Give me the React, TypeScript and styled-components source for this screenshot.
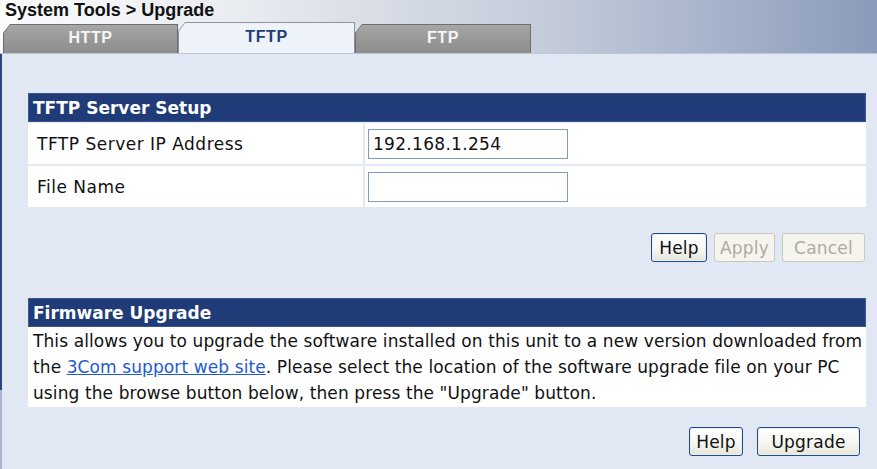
import React from "react";
import styled, { createGlobalStyle } from "styled-components";

const Global = createGlobalStyle`
  html, body { margin: 0; padding: 0; background: #e1e8f4; }
  body { font-family: "DejaVu Sans", Verdana, sans-serif; }
`;

const Page = styled.div`
  width: 877px;
  height: 469px;
  overflow: hidden;
  background: #e1e8f4;
  display: flex;
  flex-direction: column;
`;

const Header = styled.header`
  height: 54px;
  box-sizing: border-box;
  border-bottom: 1px solid #bcc7dc;
  background: linear-gradient(to right, #fbfbfc 0%, #e8ebf0 28%, #c2cad9 64%, #8a9bbb 100%);
  display: flex;
  flex-direction: column;
  padding-left: 3px;
`;

const Title = styled.h1`
  margin: 0 0 0 2px;
  height: 20px;
  font: bold 18px/20px "Liberation Sans", Arial, sans-serif;
  color: #111;
`;

const TabRow = styled.nav`
  flex: 1;
  display: flex;
  align-items: flex-end;
`;

const TabEdge = styled.div<{ $active?: boolean; $w: number }>`
  width: ${(p) => p.$w}px;
  height: ${(p) => (p.$active ? 31 : 29)}px;
  box-sizing: border-box;
  padding: 1px 1px 0 1px;
  background: ${(p) => (p.$active ? "#8d929c" : "#6e6e6e")};
  clip-path: polygon(0 9px, 7px 0, 100% 0, 100% 100%, 0 100%);
`;

const TabFace = styled.div<{ $active?: boolean }>`
  height: 100%;
  box-sizing: border-box;
  padding-bottom: 2px;
  clip-path: polygon(0 8px, 6px 0, 100% 0, 100% 100%, 0 100%);
  background: ${(p) =>
    p.$active ? "#eef2f9" : "linear-gradient(#a6a6a6, #969696 60%, #8e8e8e)"};
  color: ${(p) => (p.$active ? "#1f3c78" : "#f6f6f6")};
  display: flex;
  align-items: center;
  justify-content: center;
  font: bold 16px "Liberation Sans", Arial, sans-serif;
  letter-spacing: 0.6px;
`;

const Main = styled.main`
  flex: 1;
  padding: 39px 11px 0 26px;
  border-style: solid;
  border-width: 0 0 0 2px;
  border-image: linear-gradient(to bottom, #27457f 0, #27457f 335px, #a9b6ce 335px, #a9b6ce 100%) 1;
  display: flex;
  flex-direction: column;
`;

const SectionHead = styled.div`
  height: 29px;
  box-sizing: border-box;
  background: #1f3c78;
  box-shadow: inset 0 0 0 1px #3b5790;
  color: #fff;
  font: bold 17px "DejaVu Sans", Verdana, sans-serif;
  padding-left: 5px;
  display: flex;
  align-items: center;
`;

const FormGrid = styled.div`
  display: grid;
  grid-template-columns: 335px 1fr;
  gap: 2px;
  padding-top: 1px;
  background: #e4eaf5;
`;

const Cell = styled.div<{ $label?: boolean }>`
  height: 41px;
  background: #fff;
  display: flex;
  align-items: center;
  padding-left: ${(p) => (p.$label ? 9 : 3)}px;
  font-size: 17px;
  letter-spacing: 0.5px;
  color: #111;
`;

const TextInput = styled.input`
  width: 200px;
  height: 30px;
  box-sizing: border-box;
  border: 1px solid #7f9db9;
  padding: 0 4px;
  font: 17px "DejaVu Sans", Verdana, sans-serif;
  letter-spacing: 0.3px;
  color: #111;
  background: #fff;
  outline: none;
`;

const ButtonRow = styled.div<{ $top: number; $gap: number; $right: number }>`
  display: flex;
  justify-content: flex-end;
  gap: ${(p) => p.$gap}px;
  margin-top: ${(p) => p.$top}px;
  padding-right: ${(p) => p.$right}px;
`;

const Button = styled.button<{ $w: number }>`
  width: ${(p) => p.$w}px;
  height: 29px;
  padding: 0;
  border: 1px solid #1f4c88;
  border-radius: 3px;
  background: linear-gradient(#ffffff, #f6f6f2 55%, #e6e4da);
  box-shadow: inset 0 0 0 1px #e8edf6;
  font: 17px "DejaVu Sans", Verdana, sans-serif;
  letter-spacing: 0.2px;
  color: #111;
  &:disabled {
    border-color: #cbc9bc;
    background: #f5f4ef;
    box-shadow: none;
    color: #aeab9c;
  }
`;

const Section = styled.section<{ $top: number }>`
  margin-top: ${(p) => p.$top}px;
  display: flex;
  flex-direction: column;
`;

const Paragraph = styled.p`
  margin: 0;
  background: #fff;
  padding: 1px 5px 1px 5px;
  font-size: 17px;
  line-height: 26px;
  letter-spacing: 0.1px;
  color: #111;
  white-space: nowrap;
  overflow: hidden;
`;

const Link = styled.a`
  color: #1d5ad6;
  text-decoration: underline;
`;

export default function App() {
  return (
    <>
      <Global />
      <Page>
        <Header>
          <Title>System Tools &gt; Upgrade</Title>
          <TabRow>
            <TabEdge $w={175}>
              <TabFace>HTTP</TabFace>
            </TabEdge>
            <TabEdge $w={177} $active>
              <TabFace $active>TFTP</TabFace>
            </TabEdge>
            <TabEdge $w={176}>
              <TabFace>FTP</TabFace>
            </TabEdge>
          </TabRow>
        </Header>
        <Main>
          <Section $top={0}>
            <SectionHead>TFTP Server Setup</SectionHead>
            <FormGrid>
              <Cell $label>TFTP Server IP Address</Cell>
              <Cell>
                <TextInput defaultValue="192.168.1.254" />
              </Cell>
              <Cell $label>File Name</Cell>
              <Cell>
                <TextInput defaultValue="" />
              </Cell>
            </FormGrid>
          </Section>
          <ButtonRow $top={26} $gap={7} $right={1}>
            <Button $w={56}>Help</Button>
            <Button $w={61} disabled>
              Apply
            </Button>
            <Button $w={83} disabled>
              Cancel
            </Button>
          </ButtonRow>
          <Section $top={36}>
            <SectionHead>Firmware Upgrade</SectionHead>
            <Paragraph>
              This allows you to upgrade the software installed on this unit to a new version downloaded from
              <br />
              the <Link href="#">3Com support web site</Link>. Please select the location of the software upgrade file on your PC
              <br />
              using the browse button below, then press the "Upgrade" button.
            </Paragraph>
          </Section>
          <ButtonRow $top={20} $gap={14} $right={6}>
            <Button $w={54}>Help</Button>
            <Button $w={103}>Upgrade</Button>
          </ButtonRow>
        </Main>
      </Page>
    </>
  );
}
